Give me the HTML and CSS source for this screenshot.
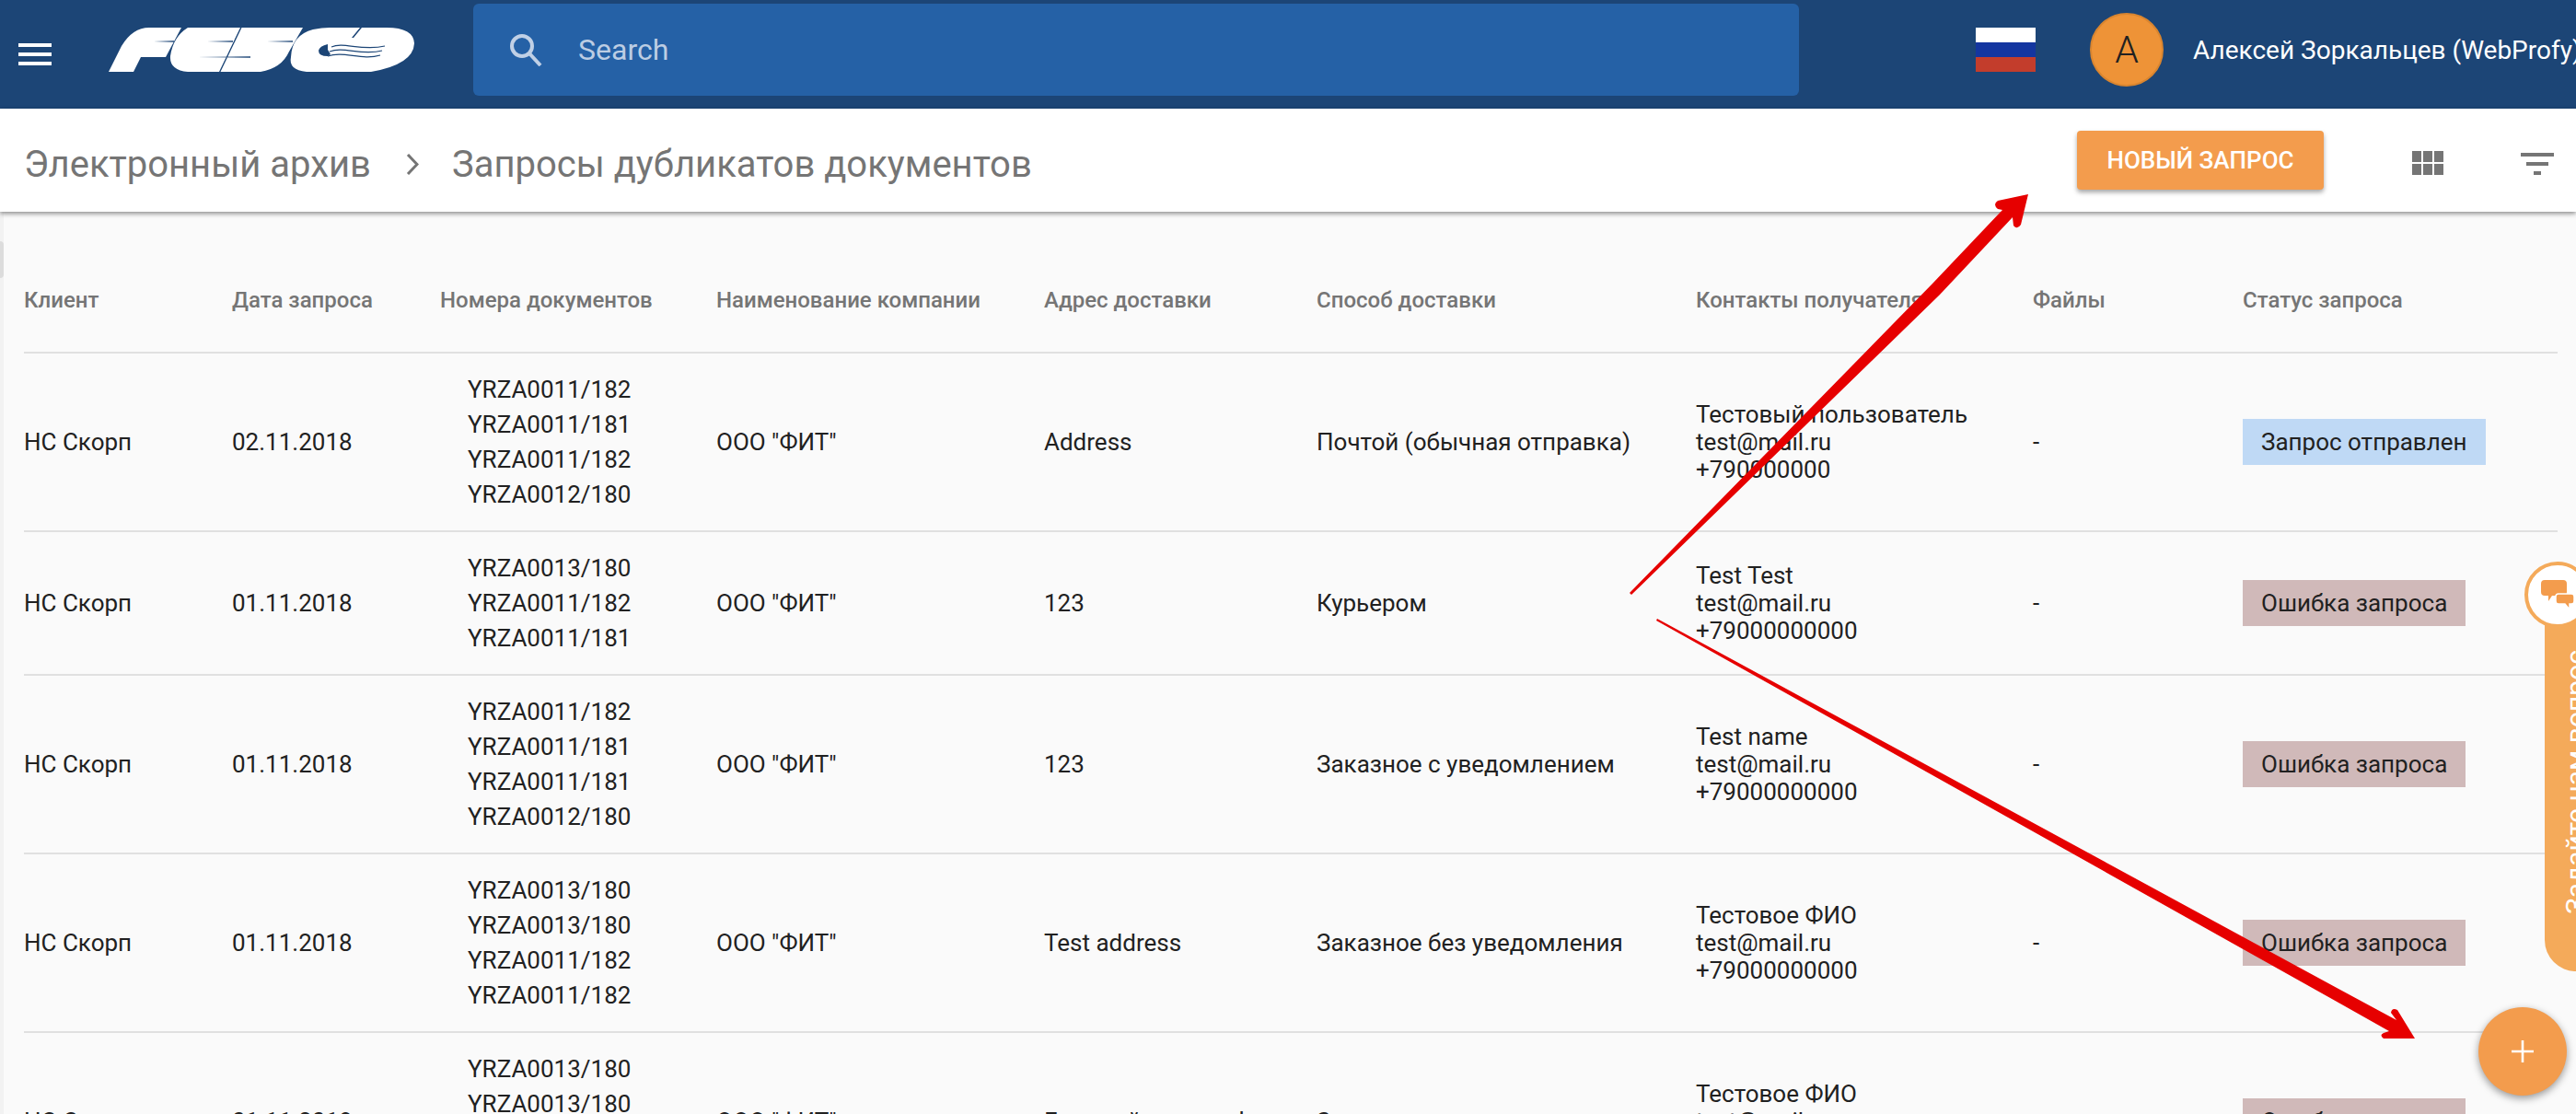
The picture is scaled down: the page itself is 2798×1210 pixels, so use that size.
FILE: index.html
```html
<!DOCTYPE html>
<html lang="ru">
<head>
<meta charset="UTF-8">
<meta name="viewport" content="width=device-width, initial-scale=1.0">
<title>Запросы дубликатов документов</title>
<link rel="stylesheet" href="styles.css">
</head>
<body>

<header class="topbar">
    <svg class="menu-icon" viewBox="0 0 36 24"><path d="M0 0h36v4H0zM0 10h36v4H0zM0 20h36v4H0z" fill="#fff"/></svg>
    <svg class="logo" viewBox="0 0 332 48">
        <path fill="#fff" d="M0 48 14 20Q26 0 44 0H79L62 32H35L27 48Z"/>
        <path fill="#fff" d="M86 0H211L196 26Q188 44 165 48H86Q66 46 67 31 70 10 86 0Z"/>
        <path fill="#fff" d="M198 32Q199 8 222 2 232 0 240 0H302Q331 0 332 17 331 40 285 48H215Q195 46 198 32Z"/>
        <path fill="#1c4576" d="M49 15 71 14.300V15.800ZM107 15 135 14.300V15.800ZM172 15 200 14.300V15.800ZM97 32 154 31.300V32.800ZM143 0h1.500L121.500 48H120ZM273 0h2l-9 11h-2zM238 18Q229 20 228 25 228 31 238 31L241 29 238 24Z"/>
        <path fill="none" stroke="#1c4576" stroke-width="1.200" d="M242 21C255 15 275 26 300 20M240 26C255 20 275 31 297 25M238 31C255 25 275 36 295 30"/>
    </svg>
    <div class="search">
        <svg class="search-icon" viewBox="0 0 36 36"><circle cx="14" cy="14" r="11" fill="none" stroke="#c0d0e6" stroke-width="4"/><path d="M22 22 34 35" fill="none" stroke="#c0d0e6" stroke-width="4"/></svg>
        <span>Search</span>
    </div>
    <div class="flag"><i class="flag-white"></i><i class="flag-blue"></i><i class="flag-red"></i></div>
    <div class="avatar">А</div>
    <div class="user-name">Алексей Зоркальцев (WebProfy)</div>
</header>

<div class="subbar">
    <div class="crumbs">
        <span>Электронный архив</span>
        <svg class="crumb-arrow" viewBox="0 0 14 23"><path d="M2 1 12 11.500 2 22" fill="none" stroke="#757575" stroke-width="3"/></svg>
        <span>Запросы дубликатов документов</span>
    </div>
    <button class="new-request">НОВЫЙ ЗАПРОС</button>
    <svg class="grid-icon" viewBox="0 0 34 26"><path fill="#757575" d="M0 0h10v12H0zM12 0h10v12H12zM24 0h10v12H24zM0 14h10v12H0zM12 14h10v12H12zM24 14h10v12H24z"/></svg>
    <svg class="filter-icon" viewBox="0 0 36 24"><path fill="#757575" d="M0 0h36v4H0zM6 10h24v4H6zM14 20h8v4h-8z"/></svg>
</div>

<main class="content">
    <table class="requests">
        <colgroup>
            <col class="c-client"><col class="c-date"><col class="c-docs"><col class="c-company"><col class="c-address"><col class="c-delivery"><col class="c-contacts"><col class="c-files"><col class="c-status">
        </colgroup>
        <thead>
            <tr>
                <th>Клиент</th><th>Дата запроса</th><th>Номера документов</th><th>Наименование компании</th><th>Адрес доставки</th><th>Способ доставки</th><th>Контакты получателя</th><th>Файлы</th><th>Статус запроса</th>
            </tr>
        </thead>
        <tbody>
            <tr>
                <td>НС Скорп</td><td>02.11.2018</td>
                <td class="docs">YRZA0011/182<br>YRZA0011/181<br>YRZA0011/182<br>YRZA0012/180</td>
                <td>ООО "ФИТ"</td><td>Address</td><td>Почтой (обычная отправка)</td>
                <td>Тестовый пользователь<br>test@mail.ru<br>+790000000</td><td>-</td>
                <td><span class="badge sent">Запрос отправлен</span></td>
            </tr>
            <tr>
                <td>НС Скорп</td><td>01.11.2018</td>
                <td class="docs">YRZA0013/180<br>YRZA0011/182<br>YRZA0011/181</td>
                <td>ООО "ФИТ"</td><td>123</td><td>Курьером</td>
                <td>Test Test<br>test@mail.ru<br>+79000000000</td><td>-</td>
                <td><span class="badge error">Ошибка запроса</span></td>
            </tr>
            <tr>
                <td>НС Скорп</td><td>01.11.2018</td>
                <td class="docs">YRZA0011/182<br>YRZA0011/181<br>YRZA0011/181<br>YRZA0012/180</td>
                <td>ООО "ФИТ"</td><td>123</td><td>Заказное с уведомлением</td>
                <td>Test name<br>test@mail.ru<br>+79000000000</td><td>-</td>
                <td><span class="badge error">Ошибка запроса</span></td>
            </tr>
            <tr>
                <td>НС Скорп</td><td>01.11.2018</td>
                <td class="docs">YRZA0013/180<br>YRZA0013/180<br>YRZA0011/182<br>YRZA0011/182</td>
                <td>ООО "ФИТ"</td><td>Test address</td><td>Заказное без уведомления</td>
                <td>Тестовое ФИО<br>test@mail.ru<br>+79000000000</td><td>-</td>
                <td><span class="badge error">Ошибка запроса</span></td>
            </tr>
            <tr>
                <td>НС Скорп</td><td>01.11.2018</td>
                <td class="docs">YRZA0013/180<br>YRZA0013/180<br>YRZA0011/182<br>YRZA0011/182</td>
                <td>ООО "ФИТ"</td><td>Главный адрес офиса</td><td>Заказное</td>
                <td>Тестовое ФИО<br>test@mail.ru<br>+79000000000</td><td>-</td>
                <td><span class="badge error">Ошибка запроса</span></td>
            </tr>
        </tbody>
    </table>
</main>

<div class="side-handle"></div>
<div class="ask-tab"><span>Задайте нам вопрос</span></div>
<div class="ask-circle">
    <svg viewBox="0 0 36 32"><path fill="#f39c4d" d="M4 0h20q4 0 4 4v9q0 4-4 4H12l-4 6v-6H4q-4 0-4-4V4q0-4 4-4z"/><path fill="#f39c4d" stroke="#fff" stroke-width="1.500" d="M19 15h14q3 0 3 3v5q0 3-3 3h-2v6l-5-6h-7q-3 0-3-3v-5q0-3 3-3z"/></svg>
</div>
<button class="fab"><svg viewBox="0 0 24 24"><path d="M10.700 0h2.600v10.700H24v2.600H13.300V24h-2.600V13.300H0v-2.600h10.700z" fill="#fff"/></svg></button>

<!-- красные стрелки поверх скриншота -->
<svg class="arrows" viewBox="0 0 2798 1210">
    <path fill="#e60000" d="M1770 644 2100 307 2175 228 2170 227Q2164 222 2170 218L2203 211 2195 244Q2191 250 2187 245L2186 236 2107 320 1772 646Z"/>
    <path fill="#e60000" d="M1800 672 2540 1074 2603 1108 2597 1100Q2598 1094 2604 1097L2623 1128H2589Q2584 1124 2589 1122L2595 1120 2540 1089 1799 674Z"/>
</svg>

</body>
</html>
```

FILE: styles.css
```css
html, body {
  height: 100%;
}
body {
  margin: 0;
  overflow: hidden;
  background-color: #fafafa;
  font-family: Roboto, 'Noto Sans', sans-serif;
  color: #212121;
}
.topbar {
  display: flex;
  align-items: center;
  height: 118px;
  padding-left: 20px;
  background-color: #1c4576;
  overflow: hidden;
}
.menu-icon {
  flex: none;
  width: 36px;
  height: 24px;
}
.logo {
  flex: none;
  width: 332px;
  height: 48px;
  margin-left: 62px;
  margin-top: -10px;
}
.search {
  flex: none;
  display: flex;
  align-items: center;
  box-sizing: border-box;
  width: 1440px;
  height: 100px;
  margin-left: 64px;
  margin-top: -10px;
  padding-left: 39px;
  border-radius: 6px;
  background-color: #2561a6;
  color: #bccde3;
  font-size: 32px;
}
.search-icon {
  width: 36px;
  height: 36px;
  margin-right: 39px;
}
.flag {
  flex: none;
  width: 65px;
  height: 48px;
  margin-left: 192px;
  margin-top: -10px;
  display: flex;
  flex-direction: column;
}
.flag i {
  flex: 1;
}
.flag-white { background-color: #fff; }
.flag-blue { background-color: #1436a0; }
.flag-red { background-color: #c33d2c; }
.avatar {
  flex: none;
  box-sizing: border-box;
  width: 80px;
  height: 80px;
  margin-left: 59px;
  margin-top: -10px;
  border: 2px solid #d9852f;
  border-radius: 50%;
  background-color: #ee9337;
  color: #212121;
  font-size: 41px;
  font-weight: 300;
  line-height: 76px;
  text-align: center;
}
.user-name {
  flex: none;
  margin-left: 32px;
  margin-top: -10px;
  color: #fff;
  font-size: 28px;
  white-space: nowrap;
}
.subbar {
  position: relative;
  display: flex;
  align-items: center;
  height: 112px;
  padding: 0 24px 0 26px;
  background-color: #fff;
  box-shadow: 0 2px 5px rgba(0, 0, 0, 0.45);
}
.crumbs {
  display: flex;
  align-items: center;
  flex: 1;
  margin-top: 8px;
  color: #757575;
  font-size: 40px;
}
.crumb-arrow {
  width: 14px;
  height: 23px;
  margin: 0 36px 0 38px;
}
.new-request {
  width: 268px;
  height: 64px;
  border: none;
  border-radius: 4px;
  background-color: #f39c4d;
  box-shadow: 0 3px 5px rgba(0, 0, 0, 0.35);
  color: #fff;
  font-family: inherit;
  font-size: 26px;
  font-weight: 500;
}
.grid-icon {
  width: 34px;
  height: 26px;
  margin: 6px 0 0 96px;
}
.filter-icon {
  width: 36px;
  height: 24px;
  margin: 8px 0 0 84px;
}
.content {
  padding: 40px 20px 0 26px;
  border-left: 4px solid #f2f2f2;
}
.requests {
  width: 2752px;
  margin-left: -4px;
  border-collapse: collapse;
  table-layout: fixed;
  font-size: 26px;
  line-height: 30px;
}
.c-client, .c-date { width: 226px; }
.c-docs { width: 300px; }
.c-company { width: 356px; }
.c-address { width: 296px; }
.c-delivery { width: 412px; }
.c-contacts { width: 366px; }
.c-files { width: 228px; }
.c-status { width: 342px; }
.requests th {
  height: 112px;
  padding: 0;
  border-bottom: 2px solid #e0e0e0;
  color: #757575;
  font-size: 24px;
  font-weight: 500;
  text-align: left;
}
.requests td {
  padding: 19px 0 20px;
  border-bottom: 2px solid #e0e0e0;
  vertical-align: middle;
}
.requests td.docs {
  padding: 20px 0 20px 30px;
  line-height: 38px;
}
.badge {
  display: inline-block;
  padding: 10px 20px;
}
.sent { background-color: #bfd9f5; }
.error { background-color: #d0b9b9; }
.side-handle {
  position: absolute;
  top: 262px;
  left: 0;
  width: 4px;
  height: 40px;
  border-radius: 0 4px 4px 0;
  background-color: #dcdcdc;
}
.ask-tab {
  position: absolute;
  top: 670px;
  right: 0;
  width: 34px;
  height: 385px;
  border-radius: 0 0 0 50px;
  background-color: #f4aa5a;
  overflow: hidden;
}
.ask-tab span {
  position: absolute;
  left: 19px;
  bottom: 62px;
  color: #fff;
  font-size: 30px;
  line-height: 30px;
  white-space: nowrap;
  writing-mode: vertical-rl;
  transform: rotate(180deg);
}
.ask-circle {
  position: absolute;
  top: 610px;
  left: 2742px;
  box-sizing: border-box;
  width: 72px;
  height: 72px;
  padding: 16px 0 0 14px;
  border: 4px solid #f4aa5a;
  border-radius: 50%;
  background-color: #fff;
}
.ask-circle svg {
  display: block;
  width: 36px;
  height: 32px;
}
.fab {
  position: absolute;
  left: 2692px;
  top: 1094px;
  width: 96px;
  height: 96px;
  padding: 0;
  border: none;
  border-radius: 50%;
  background-color: #f39c4d;
  box-shadow: 0 3px 8px rgba(0, 0, 0, 0.4);
}
.fab svg {
  display: block;
  width: 24px;
  height: 24px;
  margin: 0 auto;
}
.arrows {
  position: absolute;
  top: 0;
  left: 0;
  width: 2798px;
  height: 1210px;
  pointer-events: none;
}
```
